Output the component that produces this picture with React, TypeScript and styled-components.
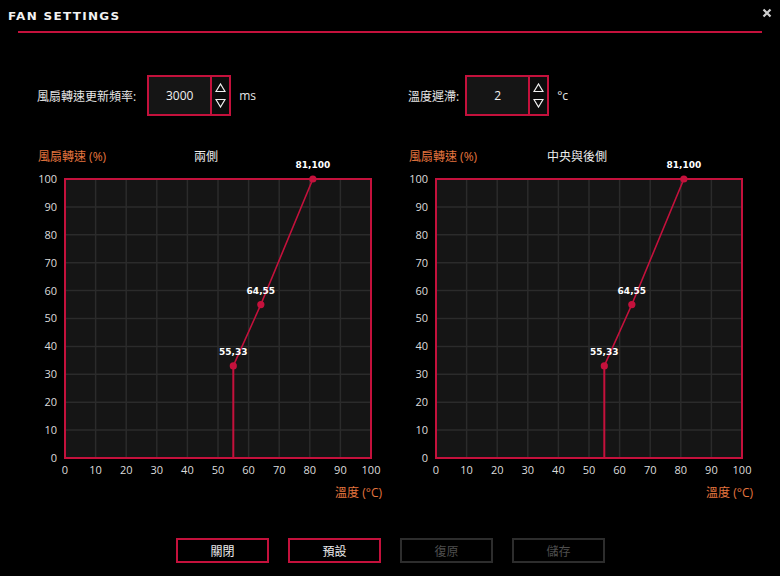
import * as React from 'react';
import styled, { createGlobalStyle } from 'styled-components';

const RED = '#c4113c';
const SANS = '"Open Sans", "Noto Sans CJK TC", sans-serif';

const GlobalStyle = createGlobalStyle`
  html, body {
    margin: 0;
    padding: 0;
    background: #000;
  }
  body {
    font-family: ${SANS};
  }
`;

const Page = styled.div`
  width: 780px;
  height: 576px;
  background: #000;
  color: #e6e6e6;
  display: flex;
  flex-direction: column;
  overflow: hidden;
`;

const TitleBar = styled.div`
  height: 31px;
  display: flex;
  align-items: center;
  justify-content: space-between;
  padding: 0 8px 0 8px;
`;

const Title = styled.h1`
  margin: 2px 0 0;
  font-family: 'DejaVu Sans', sans-serif;
  font-weight: bold;
  font-size: 12px;
  letter-spacing: 1.3px;
  color: #f2f2f2;
  transform: scaleY(0.85);
`;

const CloseButton = styled.button`
  border: 0;
  background: transparent;
  padding: 0;
  width: 10px;
  height: 10px;
  margin-top: -6px;
  display: flex;
`;

const Rule = styled.div`
  height: 2px;
  margin: 0 18px;
  background: ${RED};
`;

const Columns = styled.div<{ $top: number }>`
  display: grid;
  grid-template-columns: 352px 352px;
  column-gap: 19px;
  padding-left: 30px;
  margin-top: ${({ $top }) => $top}px;
`;

const Field = styled.div<{ $gap: number }>`
  display: flex;
  align-items: center;
  padding-left: 7px;
  height: 41px;
  font-size: 12px;
  & > :first-child {
    margin-right: ${({ $gap }) => $gap}px;
  }
`;

const FieldLabel = styled.span`
  color: #e6e6e6;
`;

const Unit = styled.span`
  margin-left: 8px;
  color: #e6e6e6;
`;

const Spinner = styled.div`
  display: flex;
  width: 84px;
  height: 41px;
  box-sizing: border-box;
  border: 2px solid ${RED};
`;

const SpinValue = styled.div`
  flex: 1;
  display: flex;
  align-items: center;
  justify-content: center;
  background: #151515;
  color: #f0f0f0;
  font-size: 12px;
`;

const SpinArrows = styled.div`
  width: 19px;
  border-left: 2px solid ${RED};
  background: #0c0c0c;
  display: flex;
  flex-direction: column;
  align-items: center;
  justify-content: space-around;
  padding: 4px 0;
  box-sizing: border-box;
`;

const Panel = styled.div`
  display: flex;
  flex-direction: column;
  width: 352px;
`;

const PanelHeader = styled.div`
  height: 18px;
  display: grid;
  grid-template-columns: 1fr auto 1fr;
  align-items: center;
  font-size: 12px;
  line-height: 18px;
`;

const AxisName = styled.span<{ $indent?: number }>`
  color: #e5763f;
  font-size: 12px;
  padding-left: ${({ $indent }) => $indent ?? 0}px;
`;

const PanelTitle = styled.span`
  color: #ededed;
`;

const ChartSvg = styled.svg`
  display: block;
  overflow: visible;
`;

const TickText = styled.text`
  font-family: ${SANS};
  font-size: 11px;
  fill: #dcdcdc;
`;

const PointLabel = styled.text`
  font-family: 'DejaVu Sans', sans-serif;
  font-weight: bold;
  font-size: 9px;
  fill: #ffffff;
`;

const AxisFooter = styled.div`
  display: flex;
  justify-content: flex-end;
  margin-top: 7px;
  height: 16px;
  line-height: 16px;
`;

const ButtonRow = styled.div`
  display: flex;
  gap: 19px;
  margin-top: 37px;
  padding-left: 176px;
`;

const ActionButton = styled.button<{ $disabled?: boolean }>`
  width: 93px;
  height: 25px;
  box-sizing: border-box;
  background: #000;
  border: 2px solid ${({ $disabled }) => ($disabled ? '#2d2d2d' : RED)};
  color: ${({ $disabled }) => ($disabled ? '#4e4e4e' : '#ececec')};
  font-family: ${SANS};
  font-size: 12px;
  padding: 0;
`;

const PLOT = { left: 35, top: 13, width: 306, height: 279 };
const sx = (v: number) => PLOT.left + (v * PLOT.width) / 100;
const sy = (v: number) => PLOT.top + PLOT.height - (v * PLOT.height) / 100;
const TICKS = [0, 10, 20, 30, 40, 50, 60, 70, 80, 90, 100];
const POINTS: [number, number][] = [
  [55, 33],
  [64, 55],
  [81, 100],
];

const Triangle = ({ down }: { down?: boolean }) => (
  <svg width="11" height="10" viewBox="0 0 11 10">
    <path
      d={down ? 'M1 1.5 H10 L5.5 9 Z' : 'M1 8.5 H10 L5.5 1 Z'}
      fill="none"
      stroke="#f2f2f2"
      strokeWidth="1.2"
    />
  </svg>
);

const NumberSpinner = ({ value }: { value: string }) => (
  <Spinner>
    <SpinValue>{value}</SpinValue>
    <SpinArrows>
      <Triangle />
      <Triangle down />
    </SpinArrows>
  </Spinner>
);

const FanChart = ({ title }: { title: string }) => {
  const line = POINTS.map(([x, y]) => `${sx(x)},${sy(y)}`).join(' ');
  return (
    <Panel>
      <PanelHeader>
        <AxisName $indent={8}>風扇轉速 (%)</AxisName>
        <PanelTitle>{title}</PanelTitle>
        <span />
      </PanelHeader>
      <ChartSvg width="352" height="312" viewBox="0 0 352 312">
        <rect x={PLOT.left} y={PLOT.top} width={PLOT.width} height={PLOT.height} fill="#151515" />
        {TICKS.slice(1, -1).map((t) => (
          <g key={t} stroke="#2b2b2b" strokeWidth="1.5">
            <line x1={sx(t)} y1={PLOT.top} x2={sx(t)} y2={PLOT.top + PLOT.height} />
            <line x1={PLOT.left} y1={sy(t)} x2={PLOT.left + PLOT.width} y2={sy(t)} />
          </g>
        ))}
        <rect
          x={PLOT.left}
          y={PLOT.top}
          width={PLOT.width}
          height={PLOT.height}
          fill="none"
          stroke={RED}
          strokeWidth="2"
        />
        {TICKS.map((t) => (
          <TickText key={`y${t}`} x={27} y={sy(t)} dy="0.36em" textAnchor="end">
            {t}
          </TickText>
        ))}
        {TICKS.map((t) => (
          <TickText key={`x${t}`} x={sx(t)} y={308} textAnchor="middle">
            {t}
          </TickText>
        ))}
        <line x1={sx(55)} y1={sy(0)} x2={sx(55)} y2={sy(33)} stroke={RED} strokeWidth="2" />
        <polyline points={line} fill="none" stroke={RED} strokeWidth="1.6" />
        {POINTS.map(([x, y]) => (
          <g key={`${x}-${y}`}>
            <circle cx={sx(x)} cy={sy(y)} r="3.6" fill={RED} />
            <PointLabel x={sx(x)} y={sy(y) - 11} textAnchor="middle">
              {x},{y}
            </PointLabel>
          </g>
        ))}
      </ChartSvg>
      <AxisFooter>
        <AxisName>溫度 (°C)</AxisName>
      </AxisFooter>
    </Panel>
  );
};

export default function App() {
  return (
    <Page>
      <GlobalStyle />
      <TitleBar>
        <Title>FAN SETTINGS</Title>
        <CloseButton aria-label="close">
          <svg width="10" height="10" viewBox="0 0 10 10">
            <path d="M1.5 1.5 L8.5 8.5 M8.5 1.5 L1.5 8.5" stroke="#cfcfcf" strokeWidth="2.2" />
          </svg>
        </CloseButton>
      </TitleBar>
      <Rule />
      <Columns $top={42}>
        <Field $gap={11}>
          <FieldLabel>風扇轉速更新頻率:</FieldLabel>
          <NumberSpinner value="3000" />
          <Unit>ms</Unit>
        </Field>
        <Field $gap={6}>
          <FieldLabel>溫度遲滯:</FieldLabel>
          <NumberSpinner value="2" />
          <Unit>°c</Unit>
        </Field>
      </Columns>
      <Columns $top={32}>
        <FanChart title="兩側" />
        <FanChart title="中央與後側" />
      </Columns>
      <ButtonRow>
        <ActionButton>關閉</ActionButton>
        <ActionButton>預設</ActionButton>
        <ActionButton $disabled>復原</ActionButton>
        <ActionButton $disabled>儲存</ActionButton>
      </ButtonRow>
    </Page>
  );
}
